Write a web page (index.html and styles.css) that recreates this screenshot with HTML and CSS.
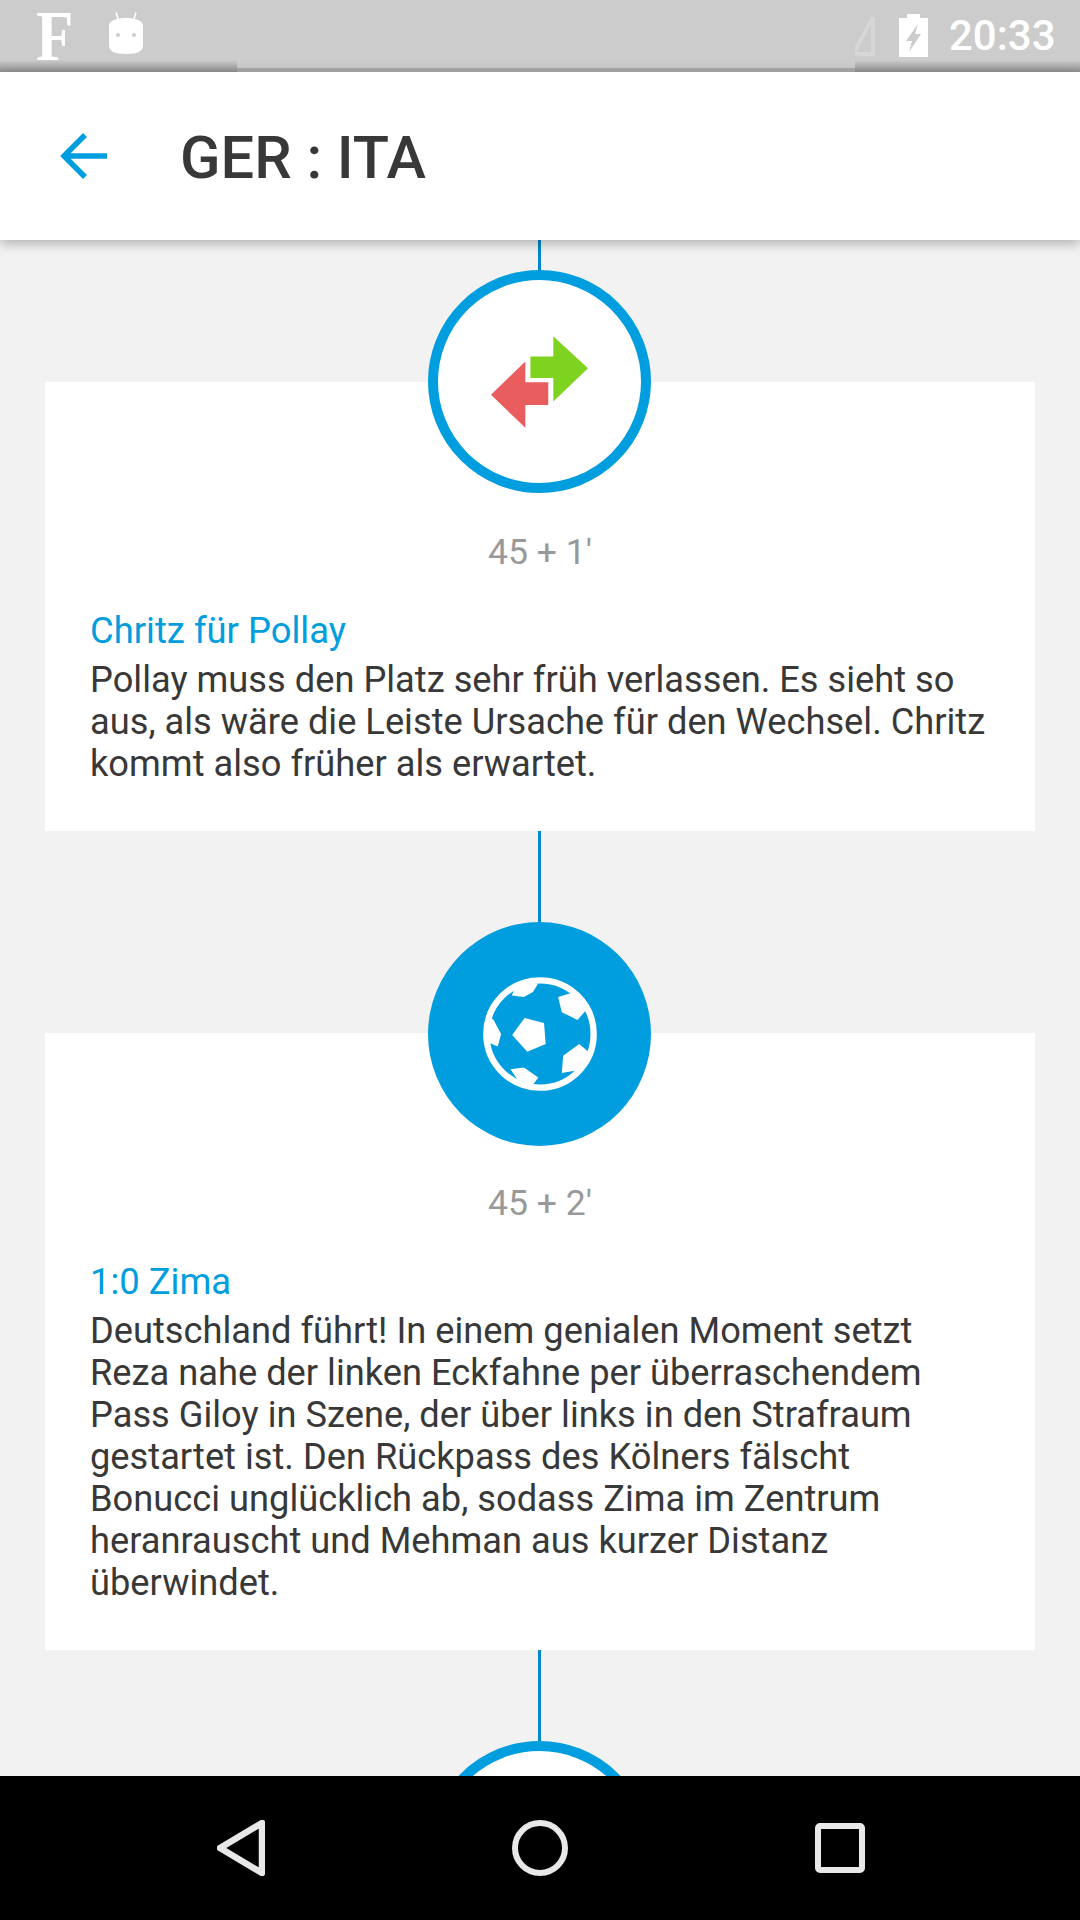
FILE: index.html
```html
<!doctype html>
<html lang="de">
<head>
<meta charset="utf-8">
<title>GER : ITA</title>
<link rel="stylesheet" href="styles.css">
</head>
<body>

<div class="statusbar">
  <span class="status-f">F</span>
  <svg class="status-droid" viewBox="0 0 34 42">
    <path d="M7 0.5l2.500 8M27 0.5l-2.500 8" stroke="#fff" stroke-width="1.600" fill="none"/>
    <path d="M8 7c5-1.500 13-1.500 18 0 4 1 8 3 8 7v19c0 6-5 8-10 8.500-5 .5-9 .5-14 0-5-.5-10-2.500-10-8.500v-19c0-4 4-6 8-7z" fill="#fff"/>
    <circle cx="9" cy="23" r="2" fill="#ccc"/>
    <circle cx="25" cy="23" r="2" fill="#ccc"/>
  </svg>
  <div class="status-right">
    <svg class="status-signal" viewBox="0 0 20 41">
      <path d="M18 2v37H0M18 2L0 36" stroke="#d6d6d6" stroke-width="4" fill="none"/>
    </svg>
    <svg class="status-battery" viewBox="0 0 29 43">
      <path fill-rule="evenodd" d="M8 0h13v4h8v39H0V4h8zM19 10L7 27h6l-3 11 12-18h-6l3-10z" fill="#fff"/>
    </svg>
    <span class="status-time">20:33</span>
  </div>
  <div class="status-edge">
    <i class="edge-tall"></i>
    <i class="edge-low"></i>
    <i class="edge-tall"></i>
  </div>
</div>

<header class="appbar">
  <svg class="back" viewBox="0 0 48 48">
    <path d="M47 24H4M25 3L4 24l21 21" stroke="#009ddf" stroke-width="5.500" fill="none"/>
  </svg>
  <h1>GER : ITA</h1>
</header>

<main class="timeline">
  <div class="line line-first"></div>
  <div class="badge">
    <svg class="swap" viewBox="0 0 288 272">
      <path d="M117 60h68V0l103 95-103 99v-70h-68z" fill="#7ed321"/>
      <path d="M170 137h-68V75L0 174l102 98v-68h68z" fill="#e95d5f"/>
    </svg>
  </div>
  <article class="card">
    <div class="minute">45 + 1'</div>
    <h2>Chritz für Pollay</h2>
    <p>Pollay muss den Platz sehr früh verlassen. Es sieht so aus, als wäre die Leiste Ursache für den Wechsel. Chritz kommt also früher als erwartet.</p>
  </article>

  <div class="line"></div>
  <div class="badge badge-goal">
    <svg class="ball" viewBox="0 0 340 340">
      <circle cx="170" cy="170" r="160" stroke="#fff" stroke-width="19" fill="none"/>
      <g fill="#fff">
        <path d="M124 122l58 15 5 63-55 23-45-50z"/>
        <path d="M100 20h64l-15 25-27 15-36-5z"/>
        <path d="M224 60l52-16 36 50-30 34-47-23z"/>
        <path d="M16 125l14 0 24 45-10 37-28-12z"/>
        <path d="M287 200l35 30-40 48-47 8 4-51z"/>
        <path d="M82 275l40-5 43 30-18 24-45-19z"/>
      </g>
    </svg>
  </div>
  <article class="card">
    <div class="minute">45 + 2'</div>
    <h2>1:0 Zima</h2>
    <p>Deutschland führt! In einem genialen Moment setzt Reza nahe der linken Eckfahne per überraschendem Pass Giloy in Szene, der über links in den Strafraum gestartet ist. Den Rückpass des Kölners fälscht Bonucci unglücklich ab, sodass Zima im Zentrum heranrauscht und Mehman aus kurzer Distanz überwindet.</p>
  </article>

  <div class="line"></div>
  <div class="badge"></div>
</main>

<nav class="navbar">
  <svg class="nav-back" viewBox="0 0 48 56">
    <path d="M45 3L3 28l42 25z" stroke="#e8e8e8" stroke-width="6.500" stroke-linejoin="round" fill="none"/>
  </svg>
  <svg class="nav-home" viewBox="0 0 56 56">
    <circle cx="28" cy="28" r="25" stroke="#e8e8e8" stroke-width="6" fill="none"/>
  </svg>
  <svg class="nav-recent" viewBox="0 0 50 50">
    <rect x="3" y="3" width="44" height="44" rx="2" stroke="#e8e8e8" stroke-width="6" fill="none"/>
  </svg>
</nav>

</body>
</html>
```

FILE: styles.css
```css
* {
  box-sizing: border-box;
}

body {
  margin: 0;
  height: 1920px;
  display: flex;
  flex-direction: column;
  overflow: hidden;
  background: #f2f2f2;
  font-family: Roboto, sans-serif;
}

/* status bar */
.statusbar {
  height: 72px;
  flex: none;
  display: flex;
  align-items: flex-start;
  position: relative;
  padding-left: 35px;
  background: #cccccc;
}

.status-f {
  display: block;
  width: 74px;
  height: 72px;
  font-family: "Liberation Serif", serif;
  font-weight: bold;
  font-size: 71px;
  line-height: 72px;
  color: #fff;
  transform: scaleX(.86);
  transform-origin: 8px 0;
}

.status-droid {
  width: 34px;
  height: 42px;
  margin-top: 12px;
}

.status-right {
  margin-left: auto;
  display: flex;
  align-items: flex-start;
}

.status-signal {
  width: 20px;
  height: 41px;
  margin-top: 15px;
}

.status-battery {
  width: 29px;
  height: 43px;
  margin: 14px 21px 0 24px;
}

.status-time {
  width: 131px;
  font-size: 42px;
  font-weight: 500;
  line-height: 72px;
  color: #fff;
}

.status-edge {
  position: absolute;
  left: 0;
  right: 0;
  bottom: 0;
  display: flex;
  align-items: flex-end;
}

.status-edge i {
  display: block;
}

.edge-tall {
  width: 237px;
  height: 12px;
  background: linear-gradient(rgba(0,0,0,0), rgba(0,0,0,.28));
}

.status-edge .edge-tall:last-child {
  width: 225px;
}

.edge-low {
  flex: 1;
  height: 4px;
  background: #adadad;
}

/* app bar */
.appbar {
  height: 168px;
  flex: none;
  display: flex;
  align-items: center;
  position: relative;
  z-index: 2;
  padding-left: 60px;
  background: #fff;
  box-shadow: 0 3px 12px rgba(0,0,0,.3);
}

.back {
  width: 48px;
  height: 48px;
  margin-right: 72px;
}

.appbar h1 {
  margin: 4px 0 0;
  font-size: 59.500px;
  font-weight: 500;
  color: #383838;
}

/* timeline */
.timeline {
  flex: 1;
  overflow: hidden;
  display: flex;
  flex-direction: column;
  align-items: center;
}

.line {
  width: 3px;
  height: 91px;
  flex: none;
  margin-right: 1px;
  background: #0288c9;
}

.line-first {
  height: 30px;
}

.badge {
  width: 223px;
  height: 223px;
  flex: none;
  margin-right: 1px;
  margin-bottom: -111px;
  display: flex;
  align-items: center;
  justify-content: center;
  position: relative;
  border: 10px solid #009ddf;
  border-radius: 50%;
  background: #fff;
}

.badge-goal {
  height: 224px;
  margin-bottom: -113px;
  background: #009ddf;
}

.swap {
  width: 97px;
  height: 92px;
}

.ball {
  width: 114px;
  height: 114px;
}

.card {
  width: 990px;
  flex: none;
  padding: 149px 48px 46px 45px;
  background: #fff;
}

.minute {
  margin-bottom: 37px;
  padding-left: 3px;
  text-align: center;
  font-size: 35.600px;
  line-height: 42px;
  color: #999;
}

.card h2 {
  margin: 0 0 7px;
  font-size: 36.400px;
  font-weight: 400;
  line-height: 42px;
  color: #009ddf;
}

.card p {
  margin: 0;
  font-size: 36.250px;
  line-height: 42px;
  color: #383838;
}

/* nav bar */
.navbar {
  height: 144px;
  flex: none;
  position: relative;
  display: flex;
  align-items: center;
  background: #000;
}

.nav-back {
  width: 48px;
  height: 56px;
  margin-left: 217px;
}

.nav-home {
  width: 56px;
  height: 56px;
  margin-left: 247px;
}

.nav-recent {
  width: 50px;
  height: 50px;
  margin-left: 247px;
}
```
